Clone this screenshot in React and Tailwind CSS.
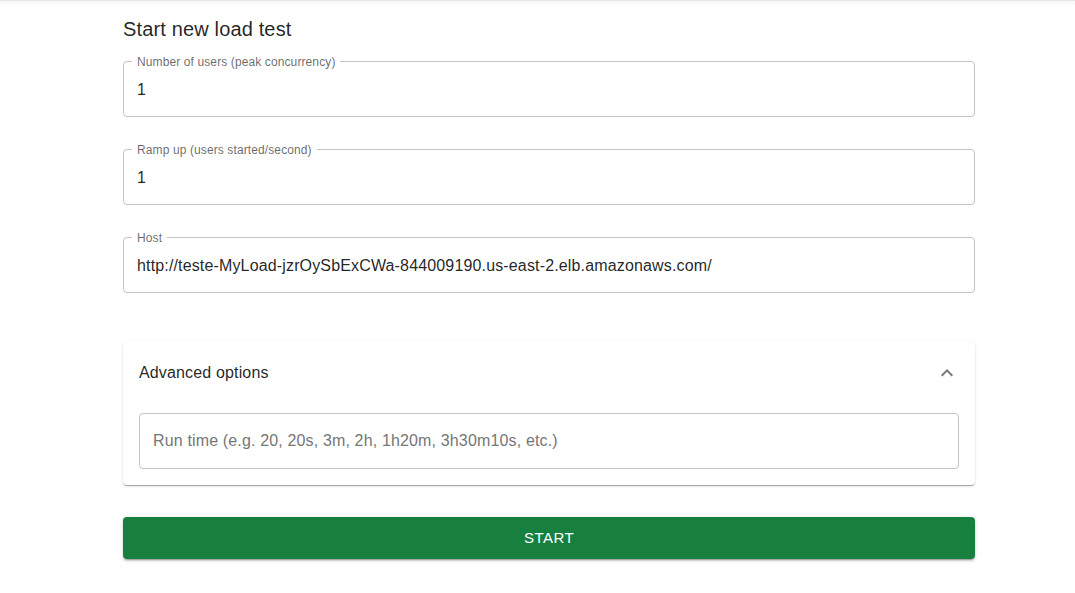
import { useState } from "react";

function OutlinedField({ label, value, onChange }) {
  return (
    <div className="relative h-14 rounded border border-[#c4c4c4]">
      <span className="absolute -top-[8px] left-[8px] bg-white px-[5px] text-xs leading-4 tracking-[0.11px] text-black/60">
        {label}
      </span>
      <input
        className="h-full w-full bg-transparent px-[13px] pt-[2px] text-base tracking-[0.15px] text-black/[0.87] outline-none"
        value={value}
        onChange={(e) => onChange(e.target.value)}
      />
    </div>
  );
}

export default function App() {
  const [users, setUsers] = useState("1");
  const [rate, setRate] = useState("1");
  const [host, setHost] = useState(
    "http://teste-MyLoad-jzrOySbExCWa-844009190.us-east-2.elb.amazonaws.com/"
  );
  const [runTime, setRunTime] = useState("");
  const [open, setOpen] = useState(true);

  return (
    <div className="min-h-screen bg-white font-['Liberation_Sans',Arial,sans-serif] text-black/[0.87]">
      <div className="h-px bg-[#e6e6e6] shadow-[0_1px_4px_rgba(0,0,0,0.18)]" />
      <div className="ml-[123px] w-[852px] pt-3">
        <h2 className="text-[20px] leading-8 font-normal tracking-[0.15px]">Start new load test</h2>

        <div className="mt-4 flex flex-col gap-8">
          <OutlinedField label="Number of users (peak concurrency)" value={users} onChange={setUsers} />
          <OutlinedField label="Ramp up (users started/second)" value={rate} onChange={setRate} />
          <OutlinedField label="Host" value={host} onChange={setHost} />
        </div>

        <div className="mt-[48px] rounded bg-white shadow-[0_2px_1px_-1px_rgba(0,0,0,0.2),0_1px_1px_0_rgba(0,0,0,0.14),0_1px_3px_0_rgba(0,0,0,0.12)]">
          <button
            type="button"
            onClick={() => setOpen(!open)}
            className="flex h-16 w-full items-center justify-between px-4 text-left"
          >
            <span className="text-base tracking-[0.15px]">Advanced options</span>
            <svg
              viewBox="0 0 24 24"
              className={`h-6 w-6 fill-black/[0.54] ${open ? "" : "rotate-180"}`}
            >
              <path d="m12 8-6 6 1.41 1.41L12 10.83l4.59 4.58L18 14z" />
            </svg>
          </button>
          {open && (
            <div className="px-4 pt-2 pb-4">
              <div className="h-14 rounded border border-[#c4c4c4]">
                <input
                  className="h-full w-full bg-transparent px-[13px] text-base tracking-[0.15px] outline-none placeholder:text-[#767676]"
                  placeholder="Run time (e.g. 20, 20s, 3m, 2h, 1h20m, 3h30m10s, etc.)"
                  value={runTime}
                  onChange={(e) => setRunTime(e.target.value)}
                />
              </div>
            </div>
          )}
        </div>

        <button
          type="submit"
          className="mt-8 h-[42px] w-full rounded bg-[#17803e] text-[15px] font-normal tracking-[0.46px] text-white shadow-[0_3px_1px_-2px_rgba(0,0,0,0.2),0_2px_2px_0_rgba(0,0,0,0.14),0_1px_5px_0_rgba(0,0,0,0.12)]"
        >
          START
        </button>
      </div>
    </div>
  );
}
